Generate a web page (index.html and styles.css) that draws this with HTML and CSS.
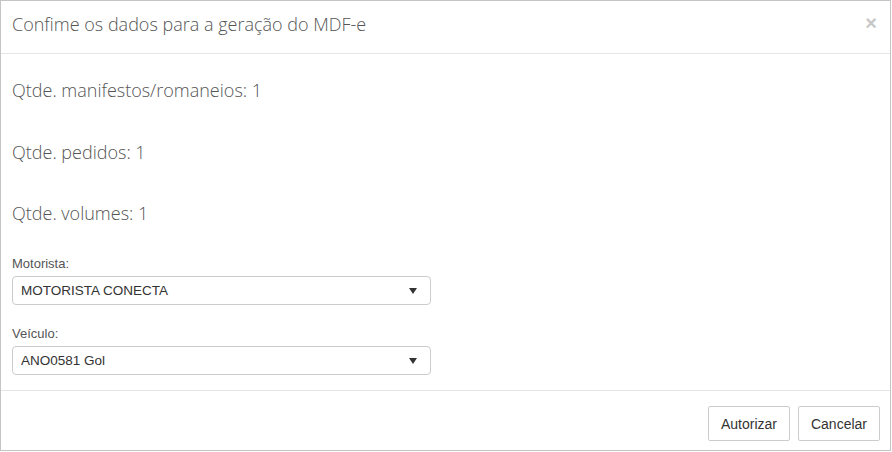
FILE: index.html
```html
<!DOCTYPE html>
<html lang="pt-BR">
<head>
    <meta charset="UTF-8" />
    <title>Gerar MDF-e</title>
    <link rel="stylesheet" href="styles.css">
</head>
<body>
    <div class="modal">
        <div class="modal-header">
            <h4 class="modal-title">Confime os dados para a geração do MDF-e</h4>
            <button type="button" class="close">&times;</button>
        </div>

        <div class="modal-body">
            <div class="counts">
                <p class="count">Qtde. manifestos/romaneios: 1</p>
                <p class="count">Qtde. pedidos: 1</p>
                <p class="count">Qtde. volumes: 1</p>
            </div>

            <div class="field">
                <label for="motorista">Motorista:</label>
                <div class="select-wrap">
                    <select id="motorista">
                        <option>MOTORISTA CONECTA</option>
                    </select>
                    <span class="caret"></span>
                </div>
            </div>

            <div class="field">
                <label for="veiculo">Veículo:</label>
                <div class="select-wrap">
                    <select id="veiculo">
                        <option>ANO0581 Gol</option>
                    </select>
                    <span class="caret"></span>
                </div>
            </div>
        </div>

        <div class="modal-footer">
            <button type="button" class="btn">Autorizar</button>
            <button type="button" class="btn">Cancelar</button>
        </div>
    </div>
</body>
</html>
```

FILE: styles.css
```css
* { box-sizing: border-box; }
body { margin: 0; background: #fff; font-family: "Liberation Sans", Arial, sans-serif; }

.modal { width: 891px; height: 451px; border: 1px solid #c4c4c4; display: flex; flex-direction: column; background: #fff; }

.modal-header { flex-shrink: 0; height: 53px; border-bottom: 1px solid #e5e5e5; display: flex; align-items: flex-start; justify-content: space-between; padding: 11px 13px 0 11px; }
.modal-title { margin: 0; font-family: "Open Sans", sans-serif; font-weight: 300; font-size: 18px; line-height: 24px; color: #555; }
.close { border: 0; background: none; padding: 0; margin-top: 1px; font-family: "Liberation Sans", Arial, sans-serif; font-size: 20px; font-weight: bold; line-height: 1; color: #000; opacity: .22; cursor: pointer; }

.modal-body { flex: 1; overflow: hidden; padding: 24px 12px 0 11px; }
.counts { display: flex; flex-direction: column; gap: 37.5px; margin-bottom: 31px; }
.count { margin: 0; font-family: "Open Sans", sans-serif; font-weight: 300; font-size: 18px; line-height: 24px; color: #555; }

.field { margin-bottom: 21px; }
.field label { display: block; font-size: 13px; line-height: 16px; color: #555; margin-bottom: 4px; }
.select-wrap { position: relative; width: 419px; }
.select-wrap select { display: block; width: 100%; height: 29px; padding: 0 8px; border: 1px solid #ccc; border-radius: 4px; background: #fff; appearance: none; -webkit-appearance: none; font-family: "Liberation Sans", Arial, sans-serif; font-size: 13.5px; color: #333; }
.caret { position: absolute; right: 14px; top: 12px; width: 0; height: 0; border-left: 4px solid transparent; border-right: 4px solid transparent; border-top: 6px solid #333; pointer-events: none; }

.modal-footer { flex-shrink: 0; height: 60px; border-top: 1px solid #e5e5e5; display: flex; justify-content: flex-end; align-items: flex-start; gap: 8px; padding: 15px 10px 0; }
.btn { height: 35px; padding: 0 12px; border: 1px solid #ccc; border-radius: 2px; background: #fff; font-family: "Liberation Sans", Arial, sans-serif; font-size: 14px; color: #333; cursor: pointer; }
```
